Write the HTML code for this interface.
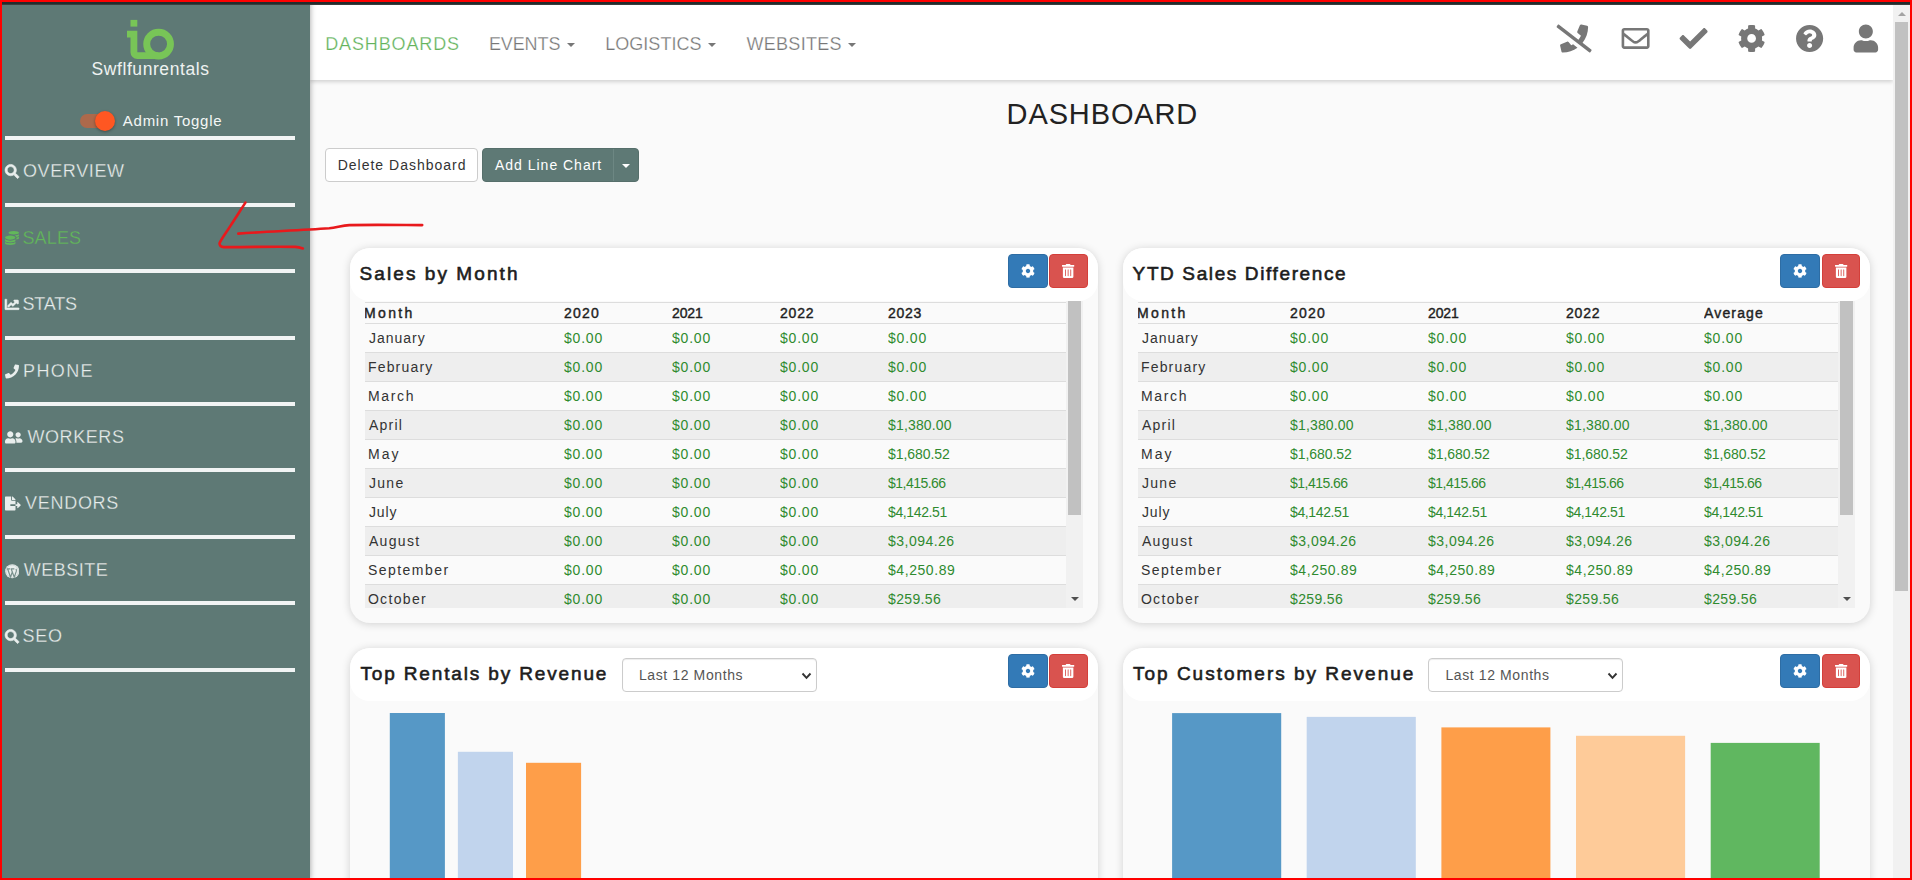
<!DOCTYPE html>
<html lang="en"><head><meta charset="utf-8"><title>Dashboard</title>
<style>
*{box-sizing:border-box}
html,body{margin:0;padding:0}
body{width:1912px;height:880px;overflow:hidden;position:relative;background:#fafafa;font-family:'Liberation Sans',Arial,sans-serif;font-size:14px;color:#333}
.abs{position:absolute}
.t{position:absolute;white-space:pre;line-height:1;margin:0;font-weight:400}
.ic{display:block;position:absolute}
#frame{position:absolute;left:0;top:0;width:1912px;height:880px;border:2px solid #ff0000;z-index:50;pointer-events:none}
#topband{position:absolute;left:2px;top:2px;width:1908px;height:3px;background:linear-gradient(#212c2c 0,#222d2d 66.600%,#3a3d3d 66.700%,#3a3d3d 100%);z-index:40}
#sidebar{position:absolute;left:0;top:0;width:310px;height:880px;background:#5e7975;box-shadow:1px 0 5px rgba(0,0,0,.28);z-index:20;color:#eef2f1}
#sidebar .hr{position:absolute;left:5px;width:290px;height:4px;background:#f1f4f4}
#sidebar .it{position:absolute;left:0;width:300px;height:62px}
#topnav{position:absolute;left:310px;top:0;width:1583px;height:80px;background:#fff;box-shadow:0 2px 4px rgba(0,0,0,.16);z-index:10}
#vscroll{position:absolute;left:1893px;top:5px;width:17px;height:873px;background:#f1f1f1;z-index:30}
#vscroll .th{position:absolute;left:2px;top:17px;width:13px;height:569px;background:#c1c1c1}
.card{position:absolute;width:748px;background:#fafafa;border-radius:20px;box-shadow:0 1px 9px rgba(0,0,0,.17)}
.card .hd{position:absolute;left:0;top:0;width:748px;height:53px;background:#fff;border-radius:20px}
.btn{position:absolute;height:34px;border-radius:4px}
.tw{position:absolute;overflow:hidden}
table{border-collapse:collapse;table-layout:fixed;position:absolute;left:0;top:1px}
th,td{padding:0;text-align:left;white-space:pre;overflow:hidden;line-height:20px;font-size:14px;font-weight:400}
th{border-top:1px solid #ddd;height:21px;line-height:20px;color:#1f1f1f;-webkit-text-stroke:.42px #1f1f1f}
td{border-top:1px solid #ddd;height:29px;padding:4px 0;color:#333}
td.g{color:#2f8a2f}
tbody tr:nth-child(even){background:#eeeeee}
.ttl{-webkit-text-stroke:.6px #1d1d1d;color:#1d1d1d;font-size:19px}
</style></head>
<body>
<div id="topband"></div>
<aside id="sidebar">
<svg class="ic" style="left:120px;top:15px" width="60" height="50" viewBox="120 15 60 50">
<rect x="130.5" y="19.9" width="6.8" height="6.7" fill="#78c557"/>
<path d="M127 30.800h10.300v21.500h21.300v6.800h-21.300a6.800 6.800 0 0 1-6.800-6.800v-14.900h-3.500z" fill="#78c557"/>
<circle cx="158.600" cy="44.100" r="11.900" fill="none" stroke="#78c557" stroke-width="6.900"/>
</svg>
<span class="t " style="left:91.6px;top:61.3px;font-size:17.5px;letter-spacing:0.569px;color:#eef2f1;">Swflfunrentals</span>
<div class="abs" style="left:80px;top:114px;width:34px;height:14px;border-radius:7px;background:#ad694b"></div>
<div class="abs" style="left:95px;top:111px;width:20px;height:20px;border-radius:50%;background:#ff5722;box-shadow:0 1px 3px rgba(0,0,0,.35)"></div>
<span class="t " style="left:122.8px;top:113.3px;font-size:15px;letter-spacing:0.745px;color:#f4f7f6;">Admin Toggle</span>
<div class="hr" style="top:136.0px"></div>
<svg class="ic" width="14.0" height="14" viewBox="0 0 512 512" style="overflow:visible;left:5px;top:164px;"><path fill="#e9eeed" stroke="#e9eeed" stroke-width="22" transform="translate(0.0 14.6)" d="M505 442.7L405.3 343c-4.5-4.5-10.6-7-17-7H372c27.6-35.3 44-79.700 44-128C416 93.100 322.900 0 208 0S0 93.100 0 208s93.100 208 208 208c48.300 0 92.700-16.400 128-44v16.300c0 6.400 2.500 12.500 7 17l99.700 99.700c9.400 9.400 24.600 9.400 33.900 0l28.300-28.300c9.400-9.400 9.400-24.600.1-34zM208 336c-70.700 0-128-57.200-128-128 0-70.700 57.200-128 128-128 70.700 0 128 57.200 128 128 0 70.700-57.200 128-128 128z"/></svg>
<span class="t " style="left:22.9px;top:161.8px;font-size:18px;letter-spacing:0.643px;color:#e9eeed;-webkit-text-stroke:.28px #5e7975;">OVERVIEW</span>
<div class="hr" style="top:203.0px"></div>
<svg class="ic" style="left:5px;top:231.4px" width="14" height="14" viewBox="0 0 512 512"><path fill="#62b85a" d="M0 405.300V448c0 35.300 86 64 192 64s192-28.700 192-64v-42.700C342.700 434.400 267.200 448 192 448S41.300 434.400 0 405.300zM320 128c106 0 192-28.700 192-64S426 0 320 0 128 28.700 128 64s86 64 192 64zM0 300.400V352c0 35.300 86 64 192 64s192-28.700 192-64v-51.600c-41.300 34-116.900 51.600-192 51.600S41.300 334.400 0 300.400zm416 11c57.300-11.100 96-31.700 96-55.400v-42.700c-23.200 16.400-57.300 27.600-96 34.500v63.600zM192 160C86 160 0 195.800 0 240s86 80 192 80 192-35.800 192-80-86-80-192-80zm219.300 56.300c60-10.800 100.700-32 100.700-56.300v-42.700c-35.500 25.100-96.500 38.600-160.700 41.800 29.500 14.300 51.200 33.500 60 57.200z"/></svg>
<span class="t " style="left:22.4px;top:228.8px;font-size:18px;letter-spacing:0.175px;color:#62b85a;-webkit-text-stroke:.28px #5e7975;">SALES</span>
<div class="hr" style="top:269.0px"></div>
<svg class="ic" width="14.0" height="14" viewBox="0 0 512 512" style="overflow:visible;left:5px;top:297px;"><path fill="#e9eeed" stroke="#e9eeed" stroke-width="22" transform="translate(0.0 14.6)" d="M500 384c6.600 0 12 5.400 12 12v40c0 6.600-5.400 12-12 12H12c-6.600 0-12-5.400-12-12V76c0-6.600 5.400-12 12-12h40c6.600 0 12 5.400 12 12v308h436zM456 96H344c-21.400 0-32.100 25.900-17 41l32.900 32.900-72 72.900-55.600-55.600c-4.700-4.700-12.200-4.700-16.900 0L96.400 305c-4.700 4.700-4.700 12.200 0 16.900l28.500 28.500c4.700 4.700 12.200 4.700 16.900 0l82.300-82.300 55.600 55.600c4.700 4.700 12.200 4.700 16.900 0l120.200-120.200 32.900 32.900c15.100 15.100 41 4.400 41-17V120c-.700-13.300-11.400-24-24.700-24z"/></svg>
<span class="t " style="left:22.4px;top:294.8px;font-size:18px;letter-spacing:-0.15px;color:#e9eeed;-webkit-text-stroke:.28px #5e7975;">STATS</span>
<div class="hr" style="top:336.0px"></div>
<svg class="ic" width="14.0" height="14" viewBox="0 0 512 512" style="overflow:visible;left:5px;top:364px;"><path fill="#e9eeed" transform="translate(0.0 14.6)" d="M493.400 24.600l-104-24c-11.300-2.600-22.900 3.300-27.500 13.900l-48 112c-4.200 9.800-1.400 21.300 6.900 28l60.600 49.600c-36 76.700-98.900 140.500-177.200 177.200l-49.600-60.600c-6.800-8.300-18.200-11.100-28-6.900l-112 48C3.900 366.500-2 378.100.600 389.400l24 104C27.100 504.200 36.700 512 48 512c256.100 0 464-207.500 464-464 0-11.200-7.700-20.900-18.600-23.400z"/></svg>
<span class="t " style="left:23.0px;top:361.8px;font-size:18px;letter-spacing:1.4px;color:#e9eeed;-webkit-text-stroke:.28px #5e7975;">PHONE</span>
<div class="hr" style="top:402.0px"></div>
<svg class="ic" width="17.5" height="14" viewBox="0 0 640 512" style="overflow:visible;left:5px;top:430px;"><path fill="#e9eeed" transform="translate(0.0 14.6)" d="M192 256c61.900 0 112-50.100 112-112S253.900 32 192 32 80 82.100 80 144s50.100 112 112 112zm76.800 32h-8.300c-20.800 10-43.900 16-68.500 16s-47.600-6-68.500-16h-8.300C51.600 288 0 339.600 0 403.200V432c0 26.500 21.500 48 48 48h288c26.500 0 48-21.500 48-48v-28.800c0-63.600-51.600-115.200-115.200-115.200zM480 256c53 0 96-43 96-96s-43-96-96-96-96 43-96 96 43 96 96 96zm48 32h-3.800c-13.900 4.800-28.600 8-44.200 8s-30.300-3.200-44.200-8H432c-20.400 0-39.200 5.900-55.700 15.400 24.400 26.300 39.700 61.200 39.700 99.800v38.400c0 2.200-.5 4.300-.600 6.400H592c26.500 0 48-21.500 48-48 0-61.900-50.100-112-112-112z"/></svg>
<span class="t " style="left:27.4px;top:427.8px;font-size:18px;letter-spacing:0.583px;color:#e9eeed;-webkit-text-stroke:.28px #5e7975;">WORKERS</span>
<div class="hr" style="top:468.0px"></div>
<svg class="ic" width="15.75" height="14" viewBox="0 0 576 512" style="overflow:visible;left:5px;top:496px;"><path fill="#e9eeed" transform="translate(0.0 14.6)" d="M384 121.900c0-6.300-2.500-12.400-7-16.900L279.100 7c-4.500-4.500-10.600-7-17-7H256v128h128zM571 308l-95.700-96.400c-10.100-10.100-27.400-3-27.400 11.300V288h-64v64h64v65.200c0 14.300 17.300 21.400 27.400 11.300L571 332c6.600-6.600 6.600-17.400 0-24zm-379 28v-32c0-8.800 7.200-16 16-16h176V160H248c-13.200 0-24-10.800-24-24V0H24C10.700 0 0 10.700 0 24v464c0 13.300 10.700 24 24 24h336c13.300 0 24-10.700 24-24V352H208c-8.800 0-16-7.200-16-16z"/></svg>
<span class="t " style="left:25.0px;top:493.8px;font-size:18px;letter-spacing:0.717px;color:#e9eeed;-webkit-text-stroke:.28px #5e7975;">VENDORS</span>
<div class="hr" style="top:535.0px"></div>
<svg class="ic" style="left:4.500px;top:564.0px" width="14.5" height="14.5" viewBox="0 0 512 512"><circle cx="256" cy="256" r="250" fill="#e9eeed"/><circle cx="256" cy="256" r="218" fill="none" stroke="#5e7975" stroke-width="14" stroke-opacity=".45"/><path d="M62 172h120M205 172h125M95 178l100 290l62-185l-36-105M258 283l70 185l72-215c12-40-2-62-20-74" fill="none" stroke="#5e7975" stroke-width="42" stroke-opacity=".8" stroke-linejoin="round"/></svg>
<span class="t " style="left:23.7px;top:560.8px;font-size:18px;letter-spacing:0.517px;color:#e9eeed;-webkit-text-stroke:.28px #5e7975;">WEBSITE</span>
<div class="hr" style="top:601.0px"></div>
<svg class="ic" width="14.0" height="14" viewBox="0 0 512 512" style="overflow:visible;left:5px;top:629px;"><path fill="#e9eeed" stroke="#e9eeed" stroke-width="22" transform="translate(0.0 14.6)" d="M505 442.7L405.3 343c-4.5-4.5-10.6-7-17-7H372c27.6-35.3 44-79.700 44-128C416 93.100 322.900 0 208 0S0 93.100 0 208s93.100 208 208 208c48.300 0 92.700-16.400 128-44v16.300c0 6.400 2.500 12.500 7 17l99.700 99.700c9.400 9.400 24.600 9.400 33.900 0l28.300-28.300c9.400-9.400 9.400-24.600.1-34zM208 336c-70.700 0-128-57.200-128-128 0-70.700 57.200-128 128-128 70.700 0 128 57.200 128 128 0 70.700-57.200 128-128 128z"/></svg>
<span class="t " style="left:22.4px;top:626.8px;font-size:18px;letter-spacing:0.8px;color:#e9eeed;-webkit-text-stroke:.28px #5e7975;">SEO</span>
<div class="hr" style="top:668px"></div>
</aside>
<nav id="topnav">
<span class="t " style="left:15.2px;top:34.9px;font-size:18px;letter-spacing:0.878px;color:#63b35b;-webkit-text-stroke:.25px #fff;">DASHBOARDS</span>
<span class="t " style="left:178.9px;top:34.9px;font-size:18px;letter-spacing:-0.1px;color:#777;-webkit-text-stroke:.25px #fff;">EVENTS</span>
<span class="t " style="left:295.2px;top:34.9px;font-size:18px;letter-spacing:0.037px;color:#777;-webkit-text-stroke:.25px #fff;">LOGISTICS</span>
<span class="t " style="left:436.5px;top:34.9px;font-size:18px;letter-spacing:0.286px;color:#777;-webkit-text-stroke:.25px #fff;">WEBSITES</span>
<div class="abs" style="left:257.2px;top:43px;width:0;height:0;border-left:4px solid transparent;border-right:4px solid transparent;border-top:4px solid #777"></div>
<div class="abs" style="left:398.0px;top:43px;width:0;height:0;border-left:4px solid transparent;border-right:4px solid transparent;border-top:4px solid #777"></div>
<div class="abs" style="left:537.9px;top:43px;width:0;height:0;border-left:4px solid transparent;border-right:4px solid transparent;border-top:4px solid #777"></div>
<svg class="ic" width="35.0" height="28" viewBox="0 0 640 512" style="overflow:visible;left:1246px;top:24px;"><path fill="#777" transform="translate(11.0 9.1)" d="M268.200 381.400l-49.600-60.600c-6.800-8.300-18.200-11.100-28-6.900l-112 48c-10.700 4.600-16.500 16.100-13.900 27.500l24 104c2.500 10.800 12.100 18.600 23.400 18.600 100.700 0 193.700-32.400 269.700-86.900l-80-61.800c-10.900 6.500-22.100 12.700-33.600 18.100zm365.600 76.700L475.100 335.500C537.900 256.400 576 156.900 576 48c0-11.200-7.700-20.900-18.600-23.400l-104-24c-11.300-2.600-22.900 3.300-27.500 13.900l-48 112c-4.200 9.800-1.400 21.300 6.900 28l60.600 49.600c-12.200 26.100-27.900 50.300-46 72.800L45.500 3.400C38.500-2 28.500-.800 23 6.200L3.400 31.400c-5.400 7-4.200 17 2.800 22.400l588.400 454.700c7 5.400 17 4.200 22.500-2.800l19.600-25.300c5.400-6.800 4.100-16.900-2.900-22.300z"/></svg>
<svg class="ic" width="28.0" height="28" viewBox="0 0 512 512" style="overflow:visible;left:1311px;top:24px;"><path fill="#777" transform="translate(11.0 9.1)" d="M464 64H48C21.490 64 0 85.490 0 112v288c0 26.510 21.490 48 48 48h416c26.510 0 48-21.490 48-48V112c0-26.510-21.490-48-48-48zm0 48v40.805c-22.422 18.259-58.168 46.651-134.587 106.490-16.841 13.247-50.201 45.072-73.413 44.701-23.208.375-56.579-31.459-73.413-44.701C106.180 199.465 70.425 171.067 48 152.805V112h416zM48 400V214.398c22.914 18.251 55.409 43.862 104.938 82.646 21.857 17.205 60.134 55.186 103.062 54.955 42.717.231 80.509-37.199 103.053-54.947 49.528-38.783 82.032-64.401 104.947-82.653V400H48z"/></svg>
<svg class="ic" width="28.0" height="28" viewBox="0 0 512 512" style="overflow:visible;left:1369px;top:24px;"><path fill="#777" transform="translate(11.0 9.1)" d="M173.898 439.404l-166.400-166.400c-9.997-9.997-9.997-26.206 0-36.204l36.203-36.204c9.997-9.998 26.207-9.998 36.204 0L192 312.690 432.095 72.596c9.997-9.997 26.207-9.997 36.204 0l36.203 36.204c9.997 9.997 9.997 26.206 0 36.204l-294.400 294.401c-9.998 9.997-26.207 9.997-36.204-.001z"/></svg>
<svg class="ic" width="28.0" height="28" viewBox="0 0 512 512" style="overflow:visible;left:1427px;top:24px;"><path fill="#777" transform="translate(11.0 9.1)" d="M487.4 315.700l-42.600-24.600c4.300-23.200 4.300-47 0-70.200l42.600-24.600c4.900-2.800 7.100-8.600 5.500-14-11.100-35.600-30-67.800-54.700-94.600-3.800-4.100-10-5.100-14.800-2.300L380.800 110c-17.900-15.400-38.500-27.300-60.800-35.100V25.800c0-5.600-3.900-10.500-9.400-11.700-36.700-8.200-74.300-7.800-109.200 0-5.500 1.200-9.400 6.100-9.400 11.700V75c-22.200 7.900-42.800 19.800-60.800 35.100L88.700 85.500c-4.900-2.800-11-1.900-14.800 2.300-24.700 26.700-43.600 58.900-54.700 94.600-1.700 5.400.6 11.200 5.500 14L67.300 221c-4.300 23.200-4.300 47 0 70.200l-42.600 24.600c-4.900 2.800-7.100 8.600-5.500 14 11.100 35.600 30 67.800 54.700 94.600 3.800 4.100 10 5.100 14.800 2.300l42.600-24.600c17.900 15.400 38.500 27.300 60.800 35.100v49.200c0 5.600 3.900 10.500 9.400 11.700 36.700 8.200 74.300 7.800 109.200 0 5.500-1.200 9.400-6.100 9.400-11.700v-49.200c22.200-7.900 42.800-19.800 60.800-35.100l42.600 24.600c4.900 2.800 11 1.900 14.800-2.300 24.700-26.700 43.600-58.900 54.700-94.600 1.500-5.500-.7-11.300-5.600-14.100zM256 336c-44.100 0-80-35.900-80-80s35.900-80 80-80 80 35.900 80 80-35.900 80-80 80z"/></svg>
<svg class="ic" width="28.0" height="28" viewBox="0 0 512 512" style="overflow:visible;left:1485px;top:24px;"><path fill="#777" transform="translate(11.0 9.1)" d="M504 256c0 136.997-111.043 248-248 248S8 392.997 8 256C8 119.083 119.043 8 256 8s248 111.083 248 248zM262.655 90c-54.497 0-89.255 22.957-116.549 63.758-3.536 5.286-2.353 12.415 2.715 16.258l34.699 26.310c5.205 3.947 12.621 3.008 16.665-2.122 17.864-22.658 30.113-35.797 57.303-35.797 20.429 0 45.698 13.148 45.698 32.958 0 14.976-12.363 22.667-32.534 33.976C247.128 238.528 216 254.941 216 296v4c0 6.627 5.373 12 12 12h56c6.627 0 12-5.373 12-12v-1.333c0-28.462 83.186-29.647 83.186-106.667 0-58.002-60.165-102-116.531-102zM256 338c-25.365 0-46 20.635-46 46 0 25.364 20.635 46 46 46s46-20.636 46-46c0-25.365-20.635-46-46-46z"/></svg>
<svg class="ic" width="24.5" height="28" viewBox="0 0 448 512" style="overflow:visible;left:1543px;top:24px;"><path fill="#777" transform="translate(11.0 9.1)" d="M224 256c70.700 0 128-57.300 128-128S294.700 0 224 0 96 57.300 96 128s57.300 128 128 128zm89.600 32h-16.700c-22.200 10.200-46.900 16-72.900 16s-50.600-5.800-72.900-16h-16.700C60.200 288 0 348.200 0 422.400V464c0 26.500 21.500 48 48 48h352c26.500 0 48-21.500 48-48v-41.600c0-74.200-60.200-134.400-134.400-134.400z"/></svg>
</nav>
<div id="vscroll"><div class="abs" style="left:4.500px;top:6.500px;width:0;height:0;border-left:4px solid transparent;border-right:4px solid transparent;border-bottom:4px solid #a3a3a3"></div><div class="th"></div></div>
<h1 class="t " style="left:1006.6px;top:100.1px;font-size:29px;letter-spacing:0.875px;color:#222;">DASHBOARD</h1>
<div class="btn" style="left:325px;top:148px;width:153px;background:#fff;border:1px solid #ccc"></div>
<span class="t " style="left:337.7px;top:158.1px;font-size:14px;letter-spacing:1.0px;color:#333;">Delete Dashboard</span>
<div class="btn" style="left:482px;top:148px;width:157px;background:#5e7975;border:1px solid #566f6b"><div class="abs" style="left:130px;top:0;width:1px;height:32px;background:#6d8783"></div><div class="abs" style="left:138.500px;top:15px;width:0;height:0;border-left:4px solid transparent;border-right:4px solid transparent;border-top:4px solid #fff"></div></div>
<span class="t " style="left:495.0px;top:158.1px;font-size:14px;letter-spacing:0.985px;color:#fff;">Add Line Chart</span>
<svg class="ic" style="left:200px;top:190px;z-index:45" width="240" height="70" viewBox="200 190 240 70" fill="none" stroke="#e8191c" stroke-width="2.600" stroke-linecap="round" stroke-linejoin="round">
<path d="M245.400 202.600C240 211 235 219 230.100 226.400C226 233 222 238 219.500 243.300C219.500 246 221 247 223.800 247.100C248 247.300 272 246.300 295.400 246.900C298 247 300.500 247.600 302.900 248.400"/>
<path d="M238.300 233.600C268 231.500 299 230.500 329.300 228.300C337 227.500 342 225.300 349.400 225.100C373 224.700 398 225 422.200 225.100"/>
</svg>
<div class="card" style="left:350px;top:248px;height:374.5px;width:748px"><div class="hd" style="width:748px"></div><h2 class="t ttl" style="left:9.6px;top:16.4px;font-size:19px;letter-spacing:2.069px;">Sales by Month</h2><div class="tw" style="left:15px;top:53px;width:718px;height:306.500px"><table style="width:701px"><colgroup><col style="width:199px"><col style="width:108px"><col style="width:108px"><col style="width:108px"><col style="width:178px"></colgroup><thead><tr><th><span style="letter-spacing:2.375px;margin-left:-1px">Month</span></th><th><span style="letter-spacing:1.2px">2020</span></th><th><span style="letter-spacing:-0.133px">2021</span></th><th><span style="letter-spacing:0.8px">2022</span></th><th><span style="letter-spacing:0.733px">2023</span></th></tr></thead><tbody><tr><td> <span style="letter-spacing:1.0px">January</span></td><td class="g"><span style="letter-spacing:0.8px">$0.00</span></td><td class="g"><span style="letter-spacing:0.8px">$0.00</span></td><td class="g"><span style="letter-spacing:0.8px">$0.00</span></td><td class="g"><span style="letter-spacing:0.8px">$0.00</span></td></tr><tr><td> <span style="letter-spacing:1.2px;margin-left:-1px">February</span></td><td class="g"><span style="letter-spacing:0.8px">$0.00</span></td><td class="g"><span style="letter-spacing:0.8px">$0.00</span></td><td class="g"><span style="letter-spacing:0.8px">$0.00</span></td><td class="g"><span style="letter-spacing:0.8px">$0.00</span></td></tr><tr><td> <span style="letter-spacing:1.7px;margin-left:-1px">March</span></td><td class="g"><span style="letter-spacing:0.8px">$0.00</span></td><td class="g"><span style="letter-spacing:0.8px">$0.00</span></td><td class="g"><span style="letter-spacing:0.8px">$0.00</span></td><td class="g"><span style="letter-spacing:0.8px">$0.00</span></td></tr><tr><td> <span style="letter-spacing:1.25px">April</span></td><td class="g"><span style="letter-spacing:0.8px">$0.00</span></td><td class="g"><span style="letter-spacing:0.8px">$0.00</span></td><td class="g"><span style="letter-spacing:0.8px">$0.00</span></td><td class="g"><span style="letter-spacing:0.162px">$1,380.00</span></td></tr><tr><td> <span style="letter-spacing:2.1px;margin-left:-1px">May</span></td><td class="g"><span style="letter-spacing:0.8px">$0.00</span></td><td class="g"><span style="letter-spacing:0.8px">$0.00</span></td><td class="g"><span style="letter-spacing:0.8px">$0.00</span></td><td class="g"><span style="letter-spacing:-0.062px">$1,680.52</span></td></tr><tr><td> <span style="letter-spacing:1.333px">June</span></td><td class="g"><span style="letter-spacing:0.8px">$0.00</span></td><td class="g"><span style="letter-spacing:0.8px">$0.00</span></td><td class="g"><span style="letter-spacing:0.8px">$0.00</span></td><td class="g"><span style="letter-spacing:-0.525px">$1,415.66</span></td></tr><tr><td> <span style="letter-spacing:0.933px">July</span></td><td class="g"><span style="letter-spacing:0.8px">$0.00</span></td><td class="g"><span style="letter-spacing:0.8px">$0.00</span></td><td class="g"><span style="letter-spacing:0.8px">$0.00</span></td><td class="g"><span style="letter-spacing:-0.375px">$4,142.51</span></td></tr><tr><td> <span style="letter-spacing:1.34px">August</span></td><td class="g"><span style="letter-spacing:0.8px">$0.00</span></td><td class="g"><span style="letter-spacing:0.8px">$0.00</span></td><td class="g"><span style="letter-spacing:0.8px">$0.00</span></td><td class="g"><span style="letter-spacing:0.475px">$3,094.26</span></td></tr><tr><td> <span style="letter-spacing:1.475px;margin-left:-1px">September</span></td><td class="g"><span style="letter-spacing:0.8px">$0.00</span></td><td class="g"><span style="letter-spacing:0.8px">$0.00</span></td><td class="g"><span style="letter-spacing:0.8px">$0.00</span></td><td class="g"><span style="letter-spacing:0.562px">$4,250.89</span></td></tr><tr><td> <span style="letter-spacing:1.333px;margin-left:-1px">October</span></td><td class="g"><span style="letter-spacing:0.8px">$0.00</span></td><td class="g"><span style="letter-spacing:0.8px">$0.00</span></td><td class="g"><span style="letter-spacing:0.8px">$0.00</span></td><td class="g"><span style="letter-spacing:0.367px">$259.56</span></td></tr></tbody></table><div class="abs" style="left:701px;top:0;width:17px;height:307px;background:#f1f1f1"><div class="abs" style="left:2px;top:0;width:13px;height:214px;background:#c1c1c1"></div><div class="abs" style="left:4.500px;top:295.500px;width:0;height:0;border-left:4px solid transparent;border-right:4px solid transparent;border-top:4px solid #505050"></div></div></div><div class="btn" style="left:658px;top:6px;width:40px;background:#337ab7;border:1px solid #2e6da4"><svg class="ic" width="14.0" height="14" viewBox="0 0 512 512" style="overflow:visible;left:12px;top:9px"><path fill="#fff" d="M487.4 315.700l-42.600-24.600c4.300-23.200 4.300-47 0-70.200l42.600-24.600c4.900-2.800 7.100-8.600 5.500-14-11.100-35.600-30-67.800-54.700-94.600-3.800-4.100-10-5.100-14.800-2.300L380.800 110c-17.900-15.400-38.500-27.300-60.800-35.100V25.800c0-5.600-3.900-10.500-9.400-11.700-36.700-8.200-74.300-7.800-109.200 0-5.500 1.200-9.400 6.100-9.400 11.700V75c-22.200 7.900-42.800 19.800-60.800 35.100L88.700 85.500c-4.900-2.800-11-1.900-14.800 2.300-24.700 26.700-43.600 58.900-54.700 94.600-1.700 5.400.6 11.200 5.500 14L67.300 221c-4.300 23.200-4.300 47 0 70.200l-42.600 24.600c-4.900 2.800-7.100 8.600-5.500 14 11.100 35.600 30 67.800 54.700 94.600 3.800 4.100 10 5.100 14.800 2.300l42.600-24.600c17.900 15.400 38.500 27.300 60.800 35.100v49.200c0 5.600 3.900 10.500 9.400 11.700 36.700 8.200 74.300 7.800 109.200 0 5.500-1.200 9.400-6.100 9.400-11.700v-49.200c22.200-7.900 42.800-19.800 60.800-35.100l42.600 24.600c4.900 2.800 11 1.900 14.800-2.300 24.700-26.700 43.600-58.900 54.700-94.600 1.500-5.500-.7-11.300-5.600-14.100zM256 336c-44.100 0-80-35.900-80-80s35.900-80 80-80 80 35.900 80 80-35.900 80-80 80z"/></svg></div><div class="btn" style="left:699px;top:6px;width:39px;background:#d9534f;border:1px solid #d43f3a"><svg class="ic" width="12.25" height="14" viewBox="0 0 448 512" style="overflow:visible;left:12px;top:9px"><path fill="#fff" d="M32 464a48 48 0 0 0 48 48h288a48 48 0 0 0 48-48V128H32zm272-256a16 16 0 0 1 32 0v224a16 16 0 0 1-32 0zm-96 0a16 16 0 0 1 32 0v224a16 16 0 0 1-32 0zm-96 0a16 16 0 0 1 32 0v224a16 16 0 0 1-32 0zM432 32H312l-9.400-18.700A24 24 0 0 0 281.100 0H166.800a23.720 23.720 0 0 0-21.400 13.300L136 32H16A16 16 0 0 0 0 48v32a16 16 0 0 0 16 16h416a16 16 0 0 0 16-16V48a16 16 0 0 0-16-16z"/></svg></div></div>
<div class="card" style="left:1123px;top:248px;height:374.5px;width:747px"><div class="hd" style="width:747px"></div><h2 class="t ttl" style="left:9.6px;top:16.4px;font-size:19px;letter-spacing:1.616px;">YTD Sales Difference</h2><div class="tw" style="left:15px;top:53px;width:718px;height:306.500px"><table style="width:700px"><colgroup><col style="width:152px"><col style="width:138px"><col style="width:138px"><col style="width:138px"><col style="width:134px"></colgroup><thead><tr><th><span style="letter-spacing:2.375px;margin-left:-1px">Month</span></th><th><span style="letter-spacing:1.2px">2020</span></th><th><span style="letter-spacing:-0.133px">2021</span></th><th><span style="letter-spacing:0.8px">2022</span></th><th><span style="letter-spacing:1.15px">Average</span></th></tr></thead><tbody><tr><td> <span style="letter-spacing:1.0px">January</span></td><td class="g"><span style="letter-spacing:0.8px">$0.00</span></td><td class="g"><span style="letter-spacing:0.8px">$0.00</span></td><td class="g"><span style="letter-spacing:0.8px">$0.00</span></td><td class="g"><span style="letter-spacing:0.8px">$0.00</span></td></tr><tr><td> <span style="letter-spacing:1.2px;margin-left:-1px">February</span></td><td class="g"><span style="letter-spacing:0.8px">$0.00</span></td><td class="g"><span style="letter-spacing:0.8px">$0.00</span></td><td class="g"><span style="letter-spacing:0.8px">$0.00</span></td><td class="g"><span style="letter-spacing:0.8px">$0.00</span></td></tr><tr><td> <span style="letter-spacing:1.7px;margin-left:-1px">March</span></td><td class="g"><span style="letter-spacing:0.8px">$0.00</span></td><td class="g"><span style="letter-spacing:0.8px">$0.00</span></td><td class="g"><span style="letter-spacing:0.8px">$0.00</span></td><td class="g"><span style="letter-spacing:0.8px">$0.00</span></td></tr><tr><td> <span style="letter-spacing:1.25px">April</span></td><td class="g"><span style="letter-spacing:0.162px">$1,380.00</span></td><td class="g"><span style="letter-spacing:0.162px">$1,380.00</span></td><td class="g"><span style="letter-spacing:0.162px">$1,380.00</span></td><td class="g"><span style="letter-spacing:0.162px">$1,380.00</span></td></tr><tr><td> <span style="letter-spacing:2.1px;margin-left:-1px">May</span></td><td class="g"><span style="letter-spacing:-0.062px">$1,680.52</span></td><td class="g"><span style="letter-spacing:-0.062px">$1,680.52</span></td><td class="g"><span style="letter-spacing:-0.062px">$1,680.52</span></td><td class="g"><span style="letter-spacing:-0.062px">$1,680.52</span></td></tr><tr><td> <span style="letter-spacing:1.333px">June</span></td><td class="g"><span style="letter-spacing:-0.525px">$1,415.66</span></td><td class="g"><span style="letter-spacing:-0.525px">$1,415.66</span></td><td class="g"><span style="letter-spacing:-0.525px">$1,415.66</span></td><td class="g"><span style="letter-spacing:-0.525px">$1,415.66</span></td></tr><tr><td> <span style="letter-spacing:0.933px">July</span></td><td class="g"><span style="letter-spacing:-0.375px">$4,142.51</span></td><td class="g"><span style="letter-spacing:-0.375px">$4,142.51</span></td><td class="g"><span style="letter-spacing:-0.375px">$4,142.51</span></td><td class="g"><span style="letter-spacing:-0.375px">$4,142.51</span></td></tr><tr><td> <span style="letter-spacing:1.34px">August</span></td><td class="g"><span style="letter-spacing:0.475px">$3,094.26</span></td><td class="g"><span style="letter-spacing:0.475px">$3,094.26</span></td><td class="g"><span style="letter-spacing:0.475px">$3,094.26</span></td><td class="g"><span style="letter-spacing:0.475px">$3,094.26</span></td></tr><tr><td> <span style="letter-spacing:1.475px;margin-left:-1px">September</span></td><td class="g"><span style="letter-spacing:0.562px">$4,250.89</span></td><td class="g"><span style="letter-spacing:0.562px">$4,250.89</span></td><td class="g"><span style="letter-spacing:0.562px">$4,250.89</span></td><td class="g"><span style="letter-spacing:0.562px">$4,250.89</span></td></tr><tr><td> <span style="letter-spacing:1.333px;margin-left:-1px">October</span></td><td class="g"><span style="letter-spacing:0.367px">$259.56</span></td><td class="g"><span style="letter-spacing:0.367px">$259.56</span></td><td class="g"><span style="letter-spacing:0.367px">$259.56</span></td><td class="g"><span style="letter-spacing:0.367px">$259.56</span></td></tr></tbody></table><div class="abs" style="left:700px;top:0;width:17px;height:307px;background:#f1f1f1"><div class="abs" style="left:2px;top:0;width:13px;height:214px;background:#c1c1c1"></div><div class="abs" style="left:4.500px;top:295.500px;width:0;height:0;border-left:4px solid transparent;border-right:4px solid transparent;border-top:4px solid #505050"></div></div></div><div class="btn" style="left:657px;top:6px;width:40px;background:#337ab7;border:1px solid #2e6da4"><svg class="ic" width="14.0" height="14" viewBox="0 0 512 512" style="overflow:visible;left:12px;top:9px"><path fill="#fff" d="M487.4 315.700l-42.600-24.600c4.300-23.200 4.300-47 0-70.200l42.600-24.600c4.900-2.800 7.100-8.600 5.500-14-11.100-35.600-30-67.800-54.700-94.600-3.800-4.100-10-5.100-14.800-2.300L380.800 110c-17.900-15.400-38.500-27.300-60.800-35.100V25.800c0-5.600-3.900-10.500-9.400-11.700-36.700-8.200-74.300-7.800-109.200 0-5.500 1.200-9.400 6.100-9.400 11.700V75c-22.200 7.900-42.800 19.800-60.800 35.100L88.700 85.500c-4.900-2.800-11-1.900-14.800 2.300-24.700 26.700-43.600 58.900-54.700 94.600-1.700 5.400.6 11.200 5.500 14L67.300 221c-4.300 23.200-4.300 47 0 70.200l-42.600 24.600c-4.900 2.800-7.100 8.600-5.500 14 11.100 35.600 30 67.800 54.700 94.600 3.800 4.100 10 5.100 14.800 2.300l42.600-24.600c17.900 15.400 38.500 27.300 60.800 35.100v49.200c0 5.600 3.900 10.500 9.400 11.700 36.700 8.200 74.300 7.800 109.200 0 5.500-1.200 9.400-6.100 9.400-11.700v-49.200c22.200-7.900 42.800-19.800 60.800-35.100l42.600 24.600c4.900 2.800 11 1.900 14.800-2.300 24.700-26.700 43.600-58.900 54.700-94.600 1.500-5.500-.7-11.300-5.600-14.100zM256 336c-44.100 0-80-35.900-80-80s35.900-80 80-80 80 35.900 80 80-35.900 80-80 80z"/></svg></div><div class="btn" style="left:699px;top:6px;width:38px;background:#d9534f;border:1px solid #d43f3a"><svg class="ic" width="12.25" height="14" viewBox="0 0 448 512" style="overflow:visible;left:12px;top:9px"><path fill="#fff" d="M32 464a48 48 0 0 0 48 48h288a48 48 0 0 0 48-48V128H32zm272-256a16 16 0 0 1 32 0v224a16 16 0 0 1-32 0zm-96 0a16 16 0 0 1 32 0v224a16 16 0 0 1-32 0zm-96 0a16 16 0 0 1 32 0v224a16 16 0 0 1-32 0zM432 32H312l-9.400-18.700A24 24 0 0 0 281.100 0H166.800a23.720 23.720 0 0 0-21.400 13.300L136 32H16A16 16 0 0 0 0 48v32a16 16 0 0 0 16 16h416a16 16 0 0 0 16-16V48a16 16 0 0 0-16-16z"/></svg></div></div>
<div class="card" style="left:350px;top:648px;height:260px;width:748px"><div class="hd" style="width:748px"></div><h2 class="t ttl" style="left:10.4px;top:16.4px;font-size:19px;letter-spacing:1.857px;">Top Rentals by Revenue</h2><div class="abs" style="left:272.3px;top:10px;width:194.500px;height:34px;background:#fff;border:1px solid #ccc;border-radius:4px;box-shadow:inset 0 1px 1px rgba(0,0,0,.075)"></div><svg class="ic" style="left:451.3px;top:23.500px" width="11" height="8" viewBox="0 0 11 8"><path d="M1.500 1.500L5.500 5.800L9.500 1.500" fill="none" stroke="#333" stroke-width="1.900"/></svg><span class="t " style="left:288.9px;top:19.7px;font-size:14px;letter-spacing:0.615px;color:#555;">Last 12 Months</span><svg class="ic" style="left:0;top:52px" width="748" height="190" viewBox="350 700 748 190"><rect x="389.8" y="713" width="55.1" height="177" fill="#1f77b4" fill-opacity=".75"/><rect x="457.9" y="751.8" width="55.1" height="138.20000000000005" fill="#aec7e8" fill-opacity=".75"/><rect x="526" y="762.8" width="55.1" height="127.20000000000005" fill="#ff7f0e" fill-opacity=".75"/></svg><div class="btn" style="left:658px;top:6px;width:40px;background:#337ab7;border:1px solid #2e6da4"><svg class="ic" width="14.0" height="14" viewBox="0 0 512 512" style="overflow:visible;left:12px;top:9px"><path fill="#fff" d="M487.4 315.700l-42.600-24.600c4.300-23.200 4.300-47 0-70.200l42.600-24.600c4.900-2.800 7.100-8.600 5.500-14-11.100-35.600-30-67.800-54.700-94.600-3.800-4.100-10-5.100-14.800-2.300L380.800 110c-17.900-15.400-38.500-27.300-60.800-35.100V25.800c0-5.600-3.900-10.500-9.400-11.700-36.700-8.200-74.300-7.800-109.200 0-5.500 1.200-9.400 6.100-9.400 11.700V75c-22.200 7.900-42.800 19.800-60.800 35.100L88.700 85.500c-4.900-2.800-11-1.900-14.800 2.300-24.700 26.700-43.600 58.900-54.700 94.600-1.700 5.400.6 11.200 5.500 14L67.300 221c-4.300 23.200-4.300 47 0 70.200l-42.600 24.600c-4.900 2.800-7.100 8.600-5.500 14 11.100 35.600 30 67.800 54.700 94.600 3.800 4.100 10 5.100 14.800 2.300l42.600-24.600c17.900 15.400 38.500 27.300 60.800 35.100v49.200c0 5.600 3.900 10.500 9.400 11.700 36.700 8.200 74.300 7.800 109.200 0 5.500-1.200 9.400-6.100 9.400-11.700v-49.200c22.200-7.900 42.800-19.800 60.800-35.100l42.600 24.600c4.900 2.800 11 1.900 14.800-2.300 24.700-26.700 43.600-58.900 54.700-94.600 1.500-5.500-.7-11.300-5.600-14.100zM256 336c-44.100 0-80-35.900-80-80s35.900-80 80-80 80 35.900 80 80-35.900 80-80 80z"/></svg></div><div class="btn" style="left:699px;top:6px;width:39px;background:#d9534f;border:1px solid #d43f3a"><svg class="ic" width="12.25" height="14" viewBox="0 0 448 512" style="overflow:visible;left:12px;top:9px"><path fill="#fff" d="M32 464a48 48 0 0 0 48 48h288a48 48 0 0 0 48-48V128H32zm272-256a16 16 0 0 1 32 0v224a16 16 0 0 1-32 0zm-96 0a16 16 0 0 1 32 0v224a16 16 0 0 1-32 0zm-96 0a16 16 0 0 1 32 0v224a16 16 0 0 1-32 0zM432 32H312l-9.400-18.700A24 24 0 0 0 281.100 0H166.800a23.720 23.720 0 0 0-21.400 13.300L136 32H16A16 16 0 0 0 0 48v32a16 16 0 0 0 16 16h416a16 16 0 0 0 16-16V48a16 16 0 0 0-16-16z"/></svg></div></div>
<div class="card" style="left:1123px;top:648px;height:260px;width:747px"><div class="hd" style="width:747px"></div><h2 class="t ttl" style="left:10.0px;top:16.4px;font-size:19px;letter-spacing:1.996px;">Top Customers by Revenue</h2><div class="abs" style="left:305.4000000000001px;top:10px;width:194.500px;height:34px;background:#fff;border:1px solid #ccc;border-radius:4px;box-shadow:inset 0 1px 1px rgba(0,0,0,.075)"></div><svg class="ic" style="left:484.4000000000001px;top:23.500px" width="11" height="8" viewBox="0 0 11 8"><path d="M1.500 1.500L5.500 5.800L9.500 1.500" fill="none" stroke="#333" stroke-width="1.900"/></svg><span class="t " style="left:322.4px;top:19.7px;font-size:14px;letter-spacing:0.608px;color:#555;">Last 12 Months</span><svg class="ic" style="left:0;top:52px" width="748" height="190" viewBox="1123 700 748 190"><rect x="1172.1" y="713.1" width="109.1" height="176.89999999999998" fill="#1f77b4" fill-opacity=".75"/><rect x="1306.7" y="716.9" width="109.1" height="173.10000000000002" fill="#aec7e8" fill-opacity=".75"/><rect x="1441.4" y="727.4" width="109.0" height="162.60000000000002" fill="#ff7f0e" fill-opacity=".75"/><rect x="1576" y="735.8" width="109.1" height="154.20000000000005" fill="#ffbb78" fill-opacity=".75"/><rect x="1710.7" y="742.9" width="109.0" height="147.10000000000002" fill="#2ca02c" fill-opacity=".75"/></svg><div class="btn" style="left:657px;top:6px;width:40px;background:#337ab7;border:1px solid #2e6da4"><svg class="ic" width="14.0" height="14" viewBox="0 0 512 512" style="overflow:visible;left:12px;top:9px"><path fill="#fff" d="M487.4 315.700l-42.600-24.600c4.300-23.200 4.300-47 0-70.200l42.600-24.600c4.900-2.800 7.100-8.600 5.500-14-11.100-35.600-30-67.800-54.700-94.600-3.800-4.100-10-5.100-14.800-2.300L380.800 110c-17.900-15.400-38.500-27.300-60.800-35.100V25.800c0-5.600-3.900-10.500-9.400-11.700-36.700-8.200-74.300-7.800-109.200 0-5.500 1.200-9.400 6.100-9.400 11.700V75c-22.200 7.900-42.800 19.800-60.800 35.100L88.700 85.500c-4.900-2.800-11-1.900-14.800 2.300-24.700 26.700-43.600 58.900-54.700 94.600-1.700 5.400.6 11.200 5.500 14L67.300 221c-4.300 23.200-4.300 47 0 70.200l-42.600 24.600c-4.900 2.800-7.100 8.600-5.500 14 11.100 35.600 30 67.800 54.700 94.600 3.800 4.100 10 5.100 14.800 2.300l42.600-24.600c17.900 15.400 38.500 27.300 60.800 35.100v49.200c0 5.600 3.900 10.500 9.400 11.700 36.700 8.200 74.300 7.800 109.200 0 5.500-1.200 9.400-6.100 9.400-11.700v-49.200c22.200-7.900 42.800-19.800 60.800-35.100l42.600 24.600c4.900 2.800 11 1.900 14.800-2.300 24.700-26.700 43.600-58.900 54.700-94.600 1.500-5.500-.7-11.300-5.600-14.100zM256 336c-44.100 0-80-35.900-80-80s35.900-80 80-80 80 35.900 80 80-35.900 80-80 80z"/></svg></div><div class="btn" style="left:699px;top:6px;width:38px;background:#d9534f;border:1px solid #d43f3a"><svg class="ic" width="12.25" height="14" viewBox="0 0 448 512" style="overflow:visible;left:12px;top:9px"><path fill="#fff" d="M32 464a48 48 0 0 0 48 48h288a48 48 0 0 0 48-48V128H32zm272-256a16 16 0 0 1 32 0v224a16 16 0 0 1-32 0zm-96 0a16 16 0 0 1 32 0v224a16 16 0 0 1-32 0zm-96 0a16 16 0 0 1 32 0v224a16 16 0 0 1-32 0zM432 32H312l-9.400-18.700A24 24 0 0 0 281.100 0H166.800a23.720 23.720 0 0 0-21.400 13.300L136 32H16A16 16 0 0 0 0 48v32a16 16 0 0 0 16 16h416a16 16 0 0 0 16-16V48a16 16 0 0 0-16-16z"/></svg></div></div>
<div id="frame"></div>
</body></html>
